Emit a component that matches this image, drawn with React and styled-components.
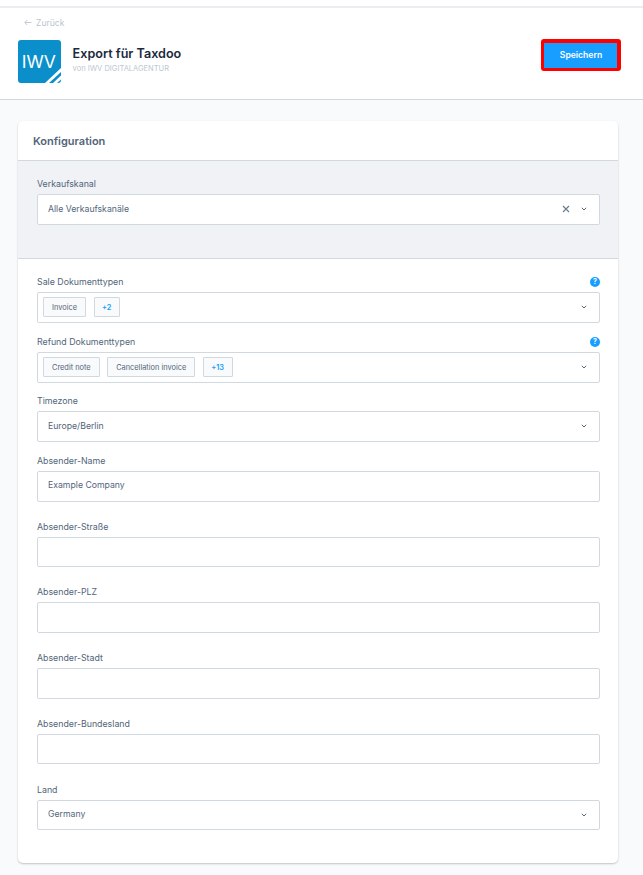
import React from 'react';
import styled, { createGlobalStyle } from 'styled-components';

const GlobalStyle = createGlobalStyle`
  html, body {
    margin: 0;
    padding: 0;
    background: #f9fafb;
    font-family: Inter, "Liberation Sans", sans-serif;
    color: #52667a;
  }
  * { box-sizing: border-box; }
`;

const Page = styled.div`
  width: 643px;
  height: 875px;
  overflow: hidden;
`;

const TopStrip = styled.div`
  height: 8px;
  background: #fff;
  border-bottom: 2px solid #e9edf0;
`;

const Header = styled.header`
  height: 92px;
  background: #fff;
  border-bottom: 1px solid #d1d9e0;
  padding: 9px 22px 0 18px;
`;

const BackLink = styled.div`
  display: flex;
  align-items: center;
  gap: 4px;
  height: 11px;
  padding-left: 6px;
  font-size: 8.6px;
  color: #b9c5cf;
`;

const HeaderRow = styled.div`
  display: flex;
  align-items: flex-start;
  margin-top: 12px;
`;

const Logo = styled.svg`
  width: 43px;
  height: 43px;
  flex: none;
`;

const AppInfo = styled.div`
  margin-left: 11.6px;
  padding-top: 6px;
  flex: 1;
`;

const AppTitle = styled.h1`
  margin: 0;
  font-size: 12.6px;
  line-height: 16px;
  font-weight: 600;
  color: #1b2a3d;
`;

const AppVendor = styled.div`
  margin-top: 1px;
  font-size: 7.5px;
  line-height: 11px;
  color: #bcc8d2;
`;

const SaveButton = styled.button`
  width: 80px;
  height: 32px;
  margin-top: -1px;
  border-style: solid;
  border-color: #ff0000;
  border-width: 4px 4px 3px 3px;
  outline: none;
  border-radius: 3px;
  background: #189eff;
  color: #fff;
  font-family: inherit;
  font-size: 8.6px;
  font-weight: 600;
  padding: 0 0 1px 1px;
`;

const Content = styled.main`
  padding: 21px 25px 0 18px;
`;

const Card = styled.section`
  background: #fff;
  border-radius: 5px;
  box-shadow: 0 1px 2px rgba(0, 0, 0, 0.22);
  height: 742px;
  overflow: hidden;
`;

const CardTitle = styled.h2`
  margin: 0;
  height: 40px;
  padding: 1px 15px 0;
  display: flex;
  align-items: center;
  font-size: 11px;
  font-weight: 600;
  color: #52667a;
  border-bottom: 1px solid #d1d9e0;
`;

const ChannelSection = styled.div`
  height: 98px;
  background: #f0f2f5;
  border-bottom: 1px solid #d1d9e0;
  padding: 17px 18px 0 19px;
`;

const FormSection = styled.div`
  padding: 17px 18px 0 19px;
`;

const Field = styled.div`
  margin-bottom: ${(p) => p.$gap}px;
`;

const LabelRow = styled.div`
  display: flex;
  justify-content: space-between;
  align-items: center;
  height: 12px;
  margin-bottom: 4px;
`;

const Label = styled.label`
  font-size: 8.8px;
  line-height: 12px;
  color: #52667a;
`;

const HelpDot = styled.span`
  width: 10px;
  height: 10px;
  border-radius: 50%;
  background: #189eff;
  color: #fff;
  font-size: 7px;
  font-weight: 700;
  line-height: 10px;
  text-align: center;
`;

const SelectBox = styled.div`
  height: 30.7px;
  display: flex;
  align-items: center;
  background: #fff;
  border: 1px solid #d1d9e0;
  border-radius: 2px;
  padding: 0 12px 0 ${(p) => (p.$tags ? 5 : 10)}px;
`;

const SelectValue = styled.span`
  flex: 1;
  padding-bottom: ${(p) => p.$lift || 1}px;
  font-size: 8.7px;
  color: #52667a;
`;

const TextInput = styled.div`
  height: 30.7px;
  display: flex;
  align-items: center;
  background: #fff;
  border: 1px solid #d1d9e0;
  border-radius: 2px;
  padding: 0 10px 3px;
  font-size: 8.7px;
  color: #52667a;
`;

const TagList = styled.div`
  flex: 1;
  display: flex;
  gap: 7.5px;
`;

const Tag = styled.span`
  height: 20px;
  display: flex;
  align-items: center;
  padding: 0 ${(p) => (p.$more ? 7.5 : 8)}px;
  background: #f9fafb;
  border: 1px solid #d1d9e0;
  border-radius: 1px;
  font-size: 7.4px;
  color: ${(p) => (p.$more ? '#189eff' : '#52667a')};
  font-weight: ${(p) => (p.$more ? 600 : 400)};
`;

const ChevronIcon = styled.svg`
  flex: none;
  margin-bottom: 1px;
`;

const ClearIcon = styled.svg`
  flex: none;
  margin-right: 11px;
`;

const Chevron = () => (
  <ChevronIcon width="6" height="4" viewBox="0 0 6 4">
    <path d="M.8.8 3 3 5.2.8" fill="none" stroke="#52667a" strokeWidth="1" />
  </ChevronIcon>
);

const Clear = () => (
  <ClearIcon width="8" height="8" viewBox="0 0 8 8">
    <path d="M1 1l6 6M7 1 1 7" fill="none" stroke="#667a8c" strokeWidth="1.1" />
  </ClearIcon>
);

const BackArrow = () => (
  <svg width="8" height="7" viewBox="0 0 8 7">
    <path d="M7.5 3.5H1M3.2 1 .9 3.5 3.2 6" fill="none" stroke="#b9c5cf" strokeWidth="0.9" />
  </svg>
);

const textFields = [
  { label: 'Absender-Name', value: 'Example Company', gap: 19 },
  { label: 'Absender-Straße', value: '', gap: 19 },
  { label: 'Absender-PLZ', value: '', gap: 19 },
  { label: 'Absender-Stadt', value: '', gap: 19 },
  { label: 'Absender-Bundesland', value: '', gap: 19.4 },
];

const App = () => (
  <Page>
    <GlobalStyle />
    <TopStrip />
    <Header>
      <BackLink><BackArrow />Zurück</BackLink>
      <HeaderRow>
        <Logo viewBox="0 0 43 43">
          <defs>
            <clipPath id="logo-clip"><rect width="43" height="43" rx="3" /></clipPath>
          </defs>
          <g clipPath="url(#logo-clip)">
            <rect width="43" height="43" fill="#0a8fcb" />
            <path d="M27 43 43 28v4L31 43zM35 43l8-7.5v4L39 43z" fill="#fff" />
          </g>
          <text x="20.8" y="27.5" textAnchor="middle" fontFamily="Inter, sans-serif" fontSize="17.5" fill="#fff">IWV</text>
        </Logo>
        <AppInfo>
          <AppTitle>Export für Taxdoo</AppTitle>
          <AppVendor>von IWV DIGITALAGENTUR</AppVendor>
        </AppInfo>
        <SaveButton>Speichern</SaveButton>
      </HeaderRow>
    </Header>
    <Content>
      <Card>
        <CardTitle>Konfiguration</CardTitle>
        <ChannelSection>
          <Field $gap={0}>
            <LabelRow><Label>Verkaufskanal</Label></LabelRow>
            <SelectBox>
              <SelectValue>Alle Verkaufskanäle</SelectValue>
              <Clear />
              <Chevron />
            </SelectBox>
          </Field>
        </ChannelSection>
        <FormSection>
          <Field $gap={13.3}>
            <LabelRow><Label>Sale Dokumenttypen</Label><HelpDot>?</HelpDot></LabelRow>
            <SelectBox $tags>
              <TagList><Tag>Invoice</Tag><Tag $more>+2</Tag></TagList>
              <Chevron />
            </SelectBox>
          </Field>
          <Field $gap={12.3}>
            <LabelRow><Label>Refund Dokumenttypen</Label><HelpDot>?</HelpDot></LabelRow>
            <SelectBox $tags>
              <TagList><Tag>Credit note</Tag><Tag>Cancellation invoice</Tag><Tag $more>+13</Tag></TagList>
              <Chevron />
            </SelectBox>
          </Field>
          <Field $gap={13.3}>
            <LabelRow><Label>Timezone</Label></LabelRow>
            <SelectBox>
              <SelectValue>Europe/Berlin</SelectValue>
              <Chevron />
            </SelectBox>
          </Field>
          {textFields.map((f) => (
            <Field $gap={f.gap} key={f.label}>
              <LabelRow><Label>{f.label}</Label></LabelRow>
              <TextInput>{f.value}</TextInput>
            </Field>
          ))}
          <Field $gap={0}>
            <LabelRow><Label>Land</Label></LabelRow>
            <SelectBox>
              <SelectValue $lift={2}>Germany</SelectValue>
              <Chevron />
            </SelectBox>
          </Field>
        </FormSection>
      </Card>
    </Content>
  </Page>
);

export default App;
